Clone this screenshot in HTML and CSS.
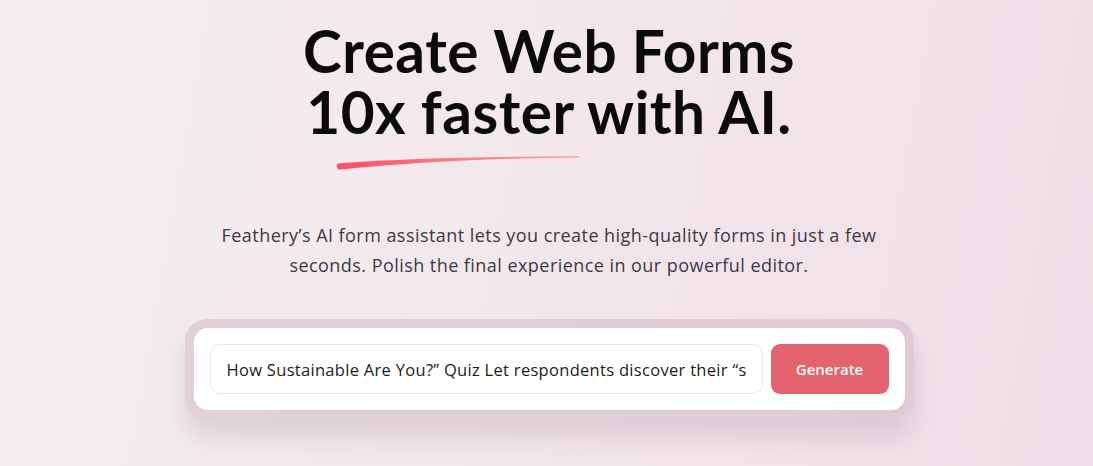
FILE: index.html
```html
<!DOCTYPE html>
<html lang="en">
<head>
<meta charset="utf-8">
<title>Feathery AI Forms</title>
<link rel="stylesheet" href="styles.css">
</head>
<body>
<main class="hero">
  <h1 class="title">Create Web Forms<br>10x faster with AI.</h1>
  <svg class="swoosh" width="250" height="20" viewBox="0 0 250 20" aria-hidden="true">
    <defs>
      <linearGradient id="sw" x1="0" y1="0" x2="1" y2="0">
        <stop offset="0" stop-color="#f8506c"/>
        <stop offset="0.55" stop-color="#f98383"/>
        <stop offset="1" stop-color="#fa9a98"/>
      </linearGradient>
    </defs>
    <path d="M3 12.5 C2 9.6 3.5 8.6 6 8.3 C70 3.6 150 1.6 245 1.2 L245 2.4 C150 3.4 80 7 7 14.6 C5 14.9 3.6 14.4 3 12.5 Z" fill="url(#sw)"/>
  </svg>
  <p class="lead">Feathery’s AI form assistant lets you create high-quality forms in just a few seconds. Polish the final experience in our powerful editor.</p>
  <div class="prompt-ring">
    <form class="prompt-card">
      <input class="prompt-input" type="text" value="How Sustainable Are You?” Quiz Let respondents discover their “sustainability score”">
      <button class="prompt-btn" type="button">Generate</button>
    </form>
  </div>
</main>
</body>
</html>
```

FILE: styles.css
```css
* { box-sizing: border-box; }
html, body { margin: 0; height: 100%; }
body {
  background: linear-gradient(100deg, #f3efee 0%, #f3e8ec 45%, #f0dde7 100%);
  font-family: "Open Sans", "Noto Sans", sans-serif;
  color: #111;
  overflow: hidden;
}
.hero {
  display: flex;
  flex-direction: column;
  align-items: center;
  padding: 20px 0 0 5px;
}
.title {
  margin: 0;
  text-align: center;
  font-family: Lato, sans-serif;
  font-weight: 700;
  font-size: 58.5px;
  line-height: 61px;
  letter-spacing: 0.5px;
  color: #0b0b0b;
}
.swoosh {
  display: block;
  margin: 13px 0 0 -180px;
}
.lead {
  margin: 45px 0 0;
  max-width: 672px;
  text-align: center;
  font-family: "Open Sans", sans-serif;
  font-size: 18px;
  letter-spacing: 0.45px;
  line-height: 30px;
  color: #3b3a45;
}
.prompt-ring {
  margin-top: 39px;
  padding: 9px;
  width: 729px;
  border-radius: 22px;
  background: rgba(205, 175, 192, 0.45);
  box-shadow: 0 18px 26px rgba(120, 90, 110, 0.18);
}
.prompt-card {
  margin: 0;
  display: flex;
  gap: 8px;
  padding: 16px;
  background: #fff;
  border-radius: 14px;
}
.prompt-input {
  flex: 1;
  min-width: 0;
  height: 50px;
  padding: 0 16px;
  border: 1px solid #ebe6ea;
  border-radius: 10px;
  font-family: "Open Sans", sans-serif;
  font-size: 16.5px;
  letter-spacing: 0.3px;
  color: #1c1c1c;
  background: #fff;
  outline: none;
}
.prompt-btn {
  width: 118px;
  height: 50px;
  border: 0;
  border-radius: 9px;
  background: #e3646e;
  color: #fff;
  font-family: "Open Sans", sans-serif;
  font-weight: 600;
  font-size: 15px;
}
```
